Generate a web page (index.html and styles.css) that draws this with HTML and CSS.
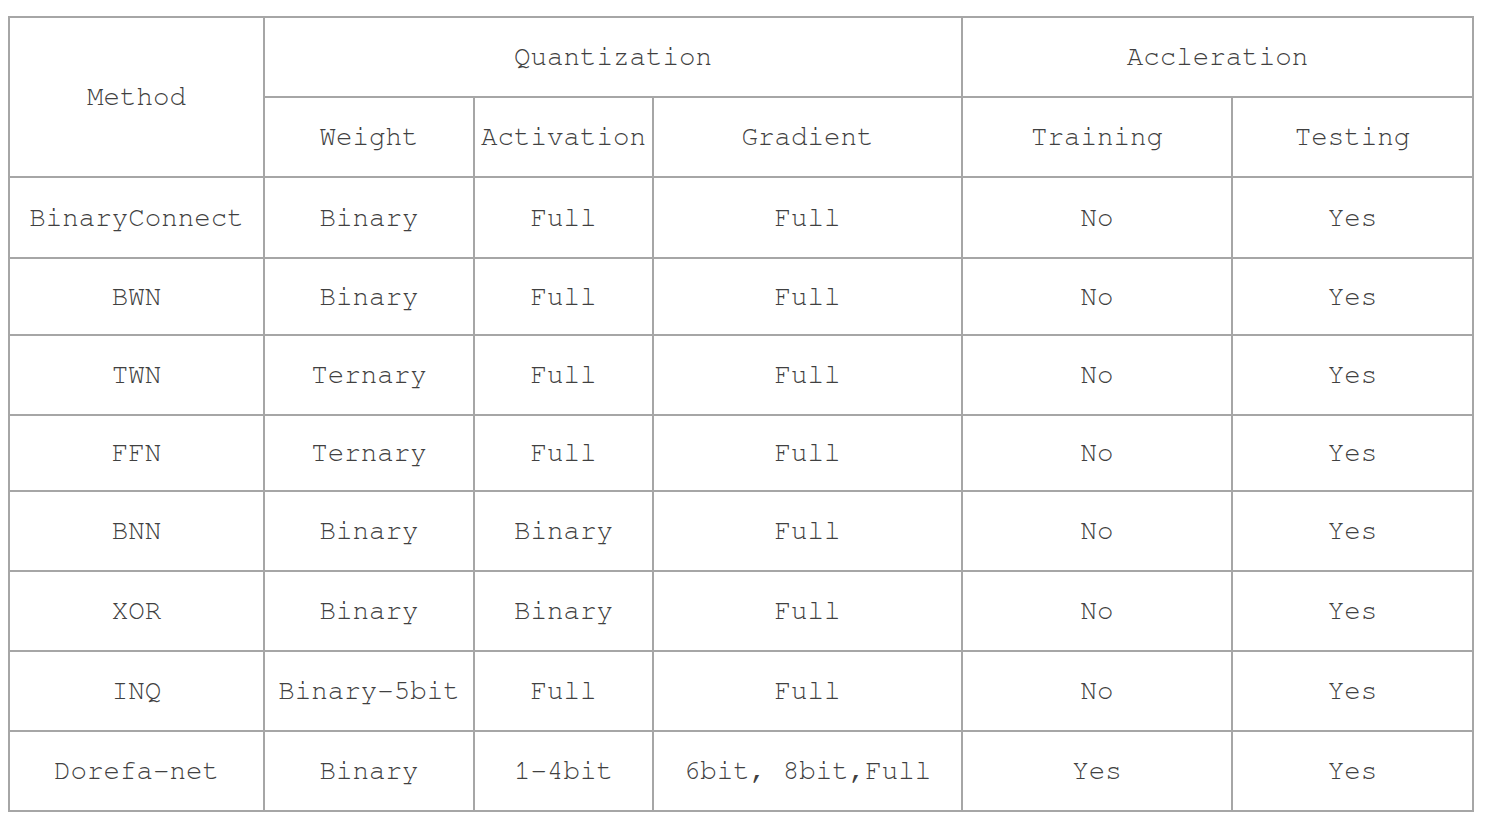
FILE: index.html
```html
<!DOCTYPE html>
<html lang="en">
<head>
<meta charset="utf-8">
<title>Quantization methods</title>
<link rel="stylesheet" href="styles.css">
</head>
<body>
<table class="grid">
  <colgroup>
    <col class="c-method">
    <col class="c-weight">
    <col class="c-act">
    <col class="c-grad">
    <col class="c-train">
    <col class="c-test">
  </colgroup>
  <thead>
    <tr class="h80">
      <th rowspan="2">Method</th>
      <th colspan="3">Quantization</th>
      <th colspan="2">Accleration</th>
    </tr>
    <tr class="h80">
      <th>Weight</th>
      <th>Activation</th>
      <th>Gradient</th>
      <th>Training</th>
      <th>Testing</th>
    </tr>
  </thead>
  <tbody>
    <tr class="h81"><td>BinaryConnect</td><td>Binary</td><td>Full</td><td>Full</td><td>No</td><td>Yes</td></tr>
    <tr class="h77"><td>BWN</td><td>Binary</td><td>Full</td><td>Full</td><td>No</td><td>Yes</td></tr>
    <tr class="h80"><td>TWN</td><td>Ternary</td><td>Full</td><td>Full</td><td>No</td><td>Yes</td></tr>
    <tr class="h76"><td>FFN</td><td>Ternary</td><td>Full</td><td>Full</td><td>No</td><td>Yes</td></tr>
    <tr class="h80"><td>BNN</td><td>Binary</td><td>Binary</td><td>Full</td><td>No</td><td>Yes</td></tr>
    <tr class="h80"><td>XOR</td><td>Binary</td><td>Binary</td><td>Full</td><td>No</td><td>Yes</td></tr>
    <tr class="h80"><td>INQ</td><td>Binary-5bit</td><td>Full</td><td>Full</td><td>No</td><td>Yes</td></tr>
    <tr class="h80"><td>Dorefa-net</td><td>Binary</td><td>1-4bit</td><td>6bit, 8bit,Full</td><td>Yes</td><td>Yes</td></tr>
  </tbody>
</table>
</body>
</html>
```

FILE: styles.css
```css
html, body {
  margin: 0;
  padding: 0;
  background: #ffffff;
}

body {
  padding: 16px 0 0 8px;
  font-family: "Nimbus Mono PS", "Nimbus Mono L", "FreeMono", "Courier", "Liberation Mono", monospace;
  font-size: 27.5px;
  color: #404040;
}

.grid {
  border-collapse: separate;
  border-spacing: 0;
  table-layout: fixed;
  width: 1466px;
  border-top: 2px solid #a6a6a6;
  border-left: 2px solid #a6a6a6;
}

.c-method { width: 255px; }
.c-weight { width: 210px; }
.c-act { width: 179px; }
.c-grad { width: 309px; }
.c-train { width: 270px; }
.c-test { width: 241px; }

.grid th,
.grid td {
  box-sizing: border-box;
  padding: 2px 0 0 0;
  border-right: 2px solid #a6a6a6;
  border-bottom: 2px solid #a6a6a6;
  text-align: center;
  vertical-align: middle;
  font-weight: normal;
  white-space: nowrap;
  line-height: 1;
}

.h80 > th, .h80 > td { height: 80px; }
.h81 > td { height: 81px; }
.h77 > td { height: 77px; }
.h76 > td { height: 76px; }
```
